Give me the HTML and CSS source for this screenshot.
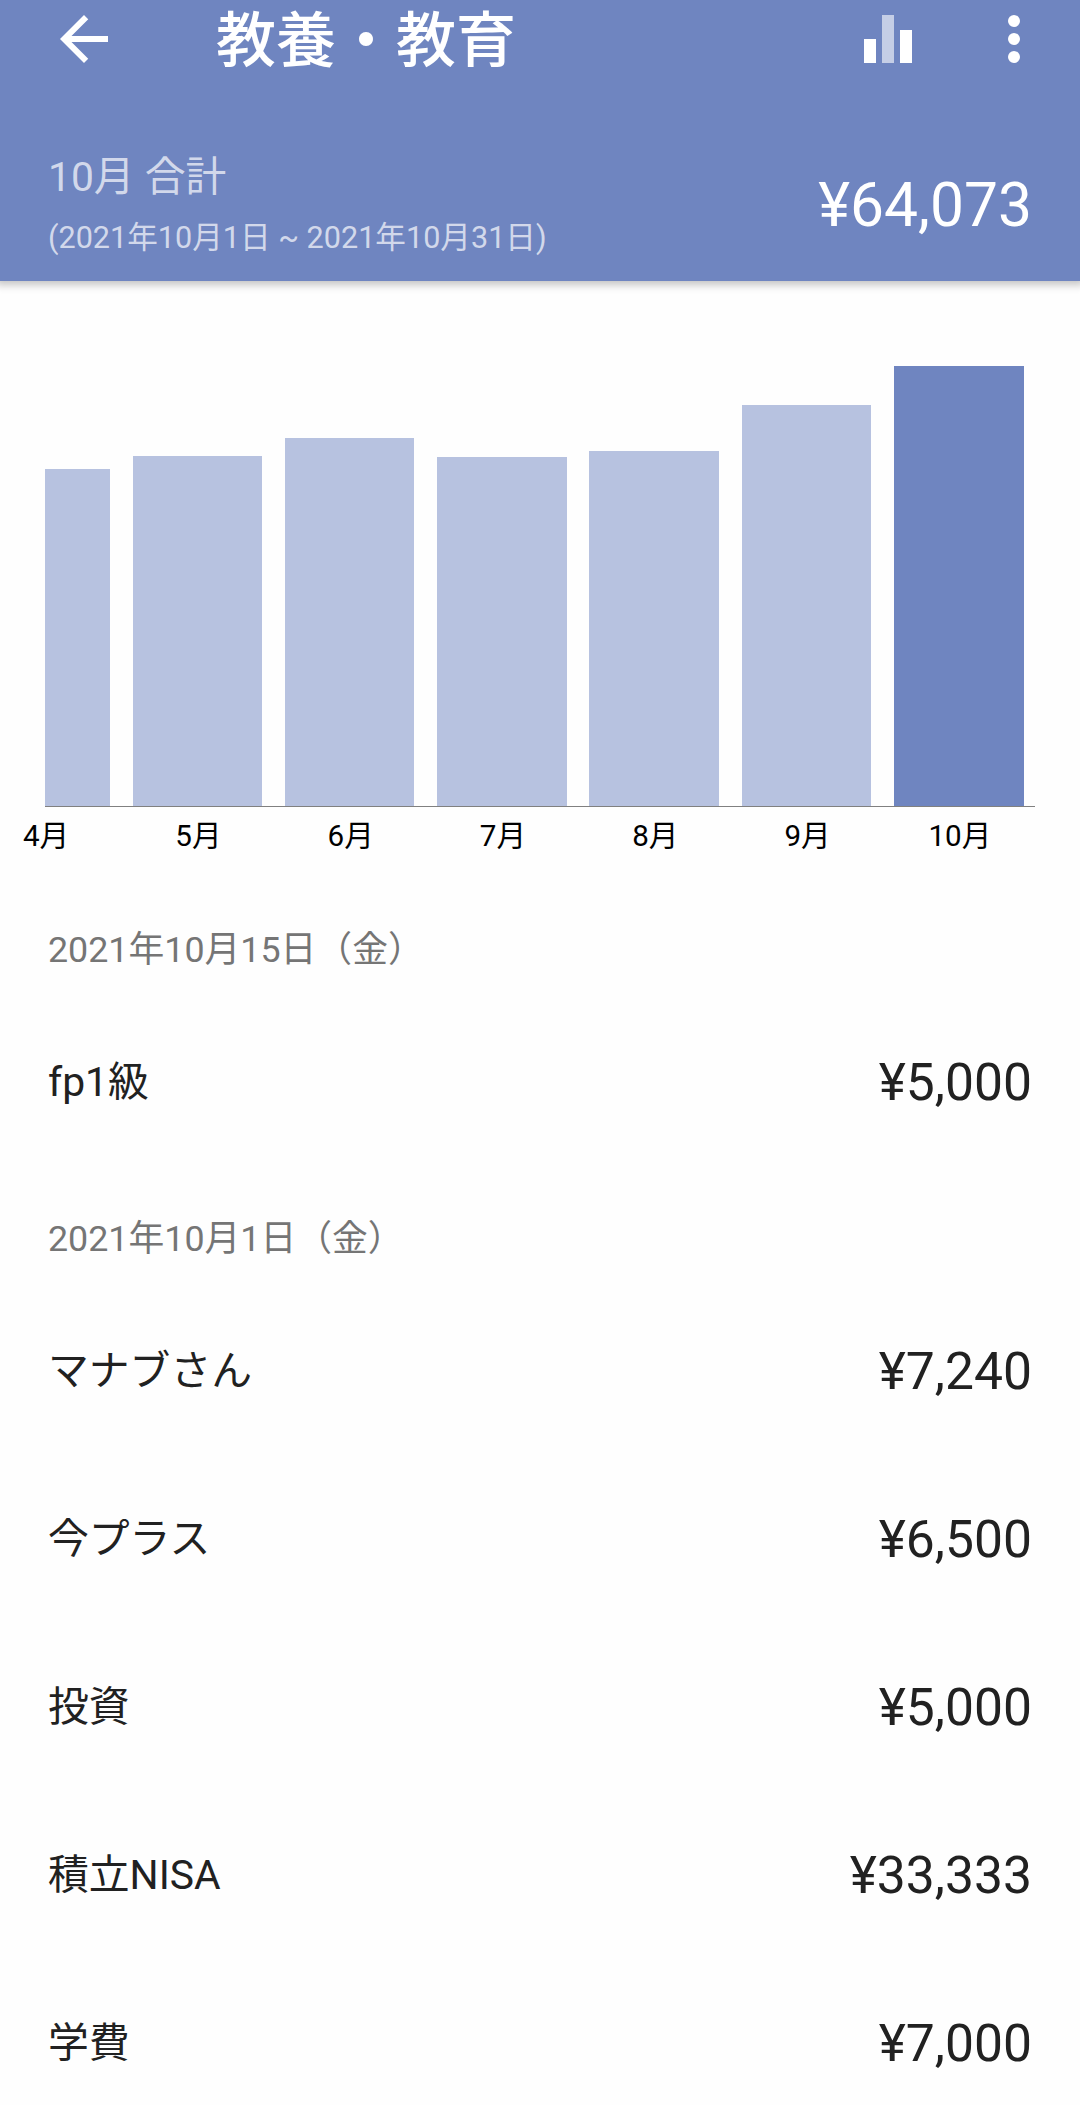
FILE: index.html
```html
<!DOCTYPE html>
<html lang="ja">
<head>
  <meta charset="UTF-8" />
  <title>教養・教育</title>
  <link rel="stylesheet" href="styles.css">
</head>
<body>
  <header class="header">
    <div class="toolbar">
      <svg class="icon" viewBox="0 0 24 24"><path d="M20 11H7.83l5.59-5.59L12 4l-8 8 8 8 1.41-1.41L7.83 13H20v-2z"/></svg>
      <h1 class="title">教養・教育</h1>
      <svg class="icon" viewBox="0 0 24 24">
        <path d="M4 12h4v8H4zM16 9h4v11h-4z"/>
        <path class="faded" d="M10 4h4v16h-4z"/>
      </svg>
      <svg class="icon menu" viewBox="0 0 24 24">
        <circle cx="12" cy="6" r="2"/>
        <circle cx="12" cy="12" r="2"/>
        <circle cx="12" cy="18" r="2"/>
      </svg>
    </div>
    <div class="summary">
      <div>
        <div class="month">10月 合計</div>
        <div class="range">(2021年10月1日 ~ 2021年10月31日)</div>
      </div>
      <div class="total">¥64,073</div>
    </div>
  </header>

  <section class="chart">
    <div class="bars">
      <div class="slot"><div class="bar" style="height: 336.7px"></div></div>
      <div class="slot"><div class="bar" style="height: 350px"></div></div>
      <div class="slot"><div class="bar" style="height: 367.7px"></div></div>
      <div class="slot"><div class="bar" style="height: 348.7px"></div></div>
      <div class="slot"><div class="bar" style="height: 355.4px"></div></div>
      <div class="slot"><div class="bar" style="height: 400.6px"></div></div>
      <div class="slot"><div class="bar current" style="height: 439.6px"></div></div>
    </div>
    <div class="labels">
      <div class="slot">4月</div>
      <div class="slot">5月</div>
      <div class="slot">6月</div>
      <div class="slot">7月</div>
      <div class="slot">8月</div>
      <div class="slot">9月</div>
      <div class="slot">10月</div>
    </div>
  </section>

  <main>
    <h2 class="date">2021年10月15日（金）</h2>
    <div class="row"><span>fp1級</span><span class="amount">¥5,000</span></div>

    <h2 class="date">2021年10月1日（金）</h2>
    <div class="row"><span>マナブさん</span><span class="amount">¥7,240</span></div>
    <div class="row"><span>今プラス</span><span class="amount">¥6,500</span></div>
    <div class="row"><span>投資</span><span class="amount">¥5,000</span></div>
    <div class="row"><span>積立NISA</span><span class="amount">¥33,333</span></div>
    <div class="row"><span>学費</span><span class="amount">¥7,000</span></div>
  </main>
</body>
</html>
```
FILE: styles.css
```css
* { box-sizing: border-box; }
body {
  margin: 0;
  height: 2105px;
  overflow: hidden;
  background: #fefefe;
  color: #212121;
  font-family: Roboto, "Noto Sans CJK JP", sans-serif;
}

/* header */
.header {
  height: 281px;
  background: #6f85c0;
  color: #fff;
  box-shadow: 0 0 8px 4px rgba(0, 0, 0, 0.23);
}
.toolbar {
  display: flex;
  align-items: center;
  height: 78px;
  padding: 0 30px 0 48px;
}
.icon { width: 72px; height: 72px; fill: #fff; flex: none; }
.menu { margin-left: 54px; }
.faded { opacity: 0.6; }
.title {
  flex: 1;
  margin: 0;
  padding: 6px 0 0 96px;
  font-size: 60px;
  font-weight: 500;
  line-height: 72px;
}
.summary {
  display: flex;
  justify-content: space-between;
  padding: 69px 48px 0;
}
.month, .range { color: rgba(255, 255, 255, 0.7); }
.month { font-size: 40.8px; line-height: 60px; }
.range { font-size: 30.6px; line-height: 62px; }
.total { font-size: 60.5px; line-height: 117px; }

/* chart */
.chart { padding: 0 45px; }
.bars {
  display: flex;
  justify-content: flex-end;
  align-items: flex-end;
  height: 526px;
  overflow: hidden;
  border-bottom: 1px solid #808080;
}
.labels {
  display: flex;
  justify-content: flex-end;
  color: #000;
  font-size: 29.6px;
  line-height: 58px;
  text-align: center;
}
.slot { flex: none; width: 152.3px; }
.labels .slot { padding-left: 2px; }
.bar { width: 129.6px; margin: 0 auto; background: #b7c2e0; }
.current { background: #6f85c0; }

/* list */
main { padding-top: 12px; }
.date {
  margin: 0;
  padding: 26px 48px 0;
  color: #757575;
  font-size: 35.8px;
  font-weight: 400;
  line-height: 95px;
}
.row {
  display: flex;
  justify-content: space-between;
  padding: 0 48px;
  font-size: 40.8px;
  line-height: 168px;
}
.amount { padding-top: 1px; margin-bottom: -1px; font-size: 51.6px; }
```
